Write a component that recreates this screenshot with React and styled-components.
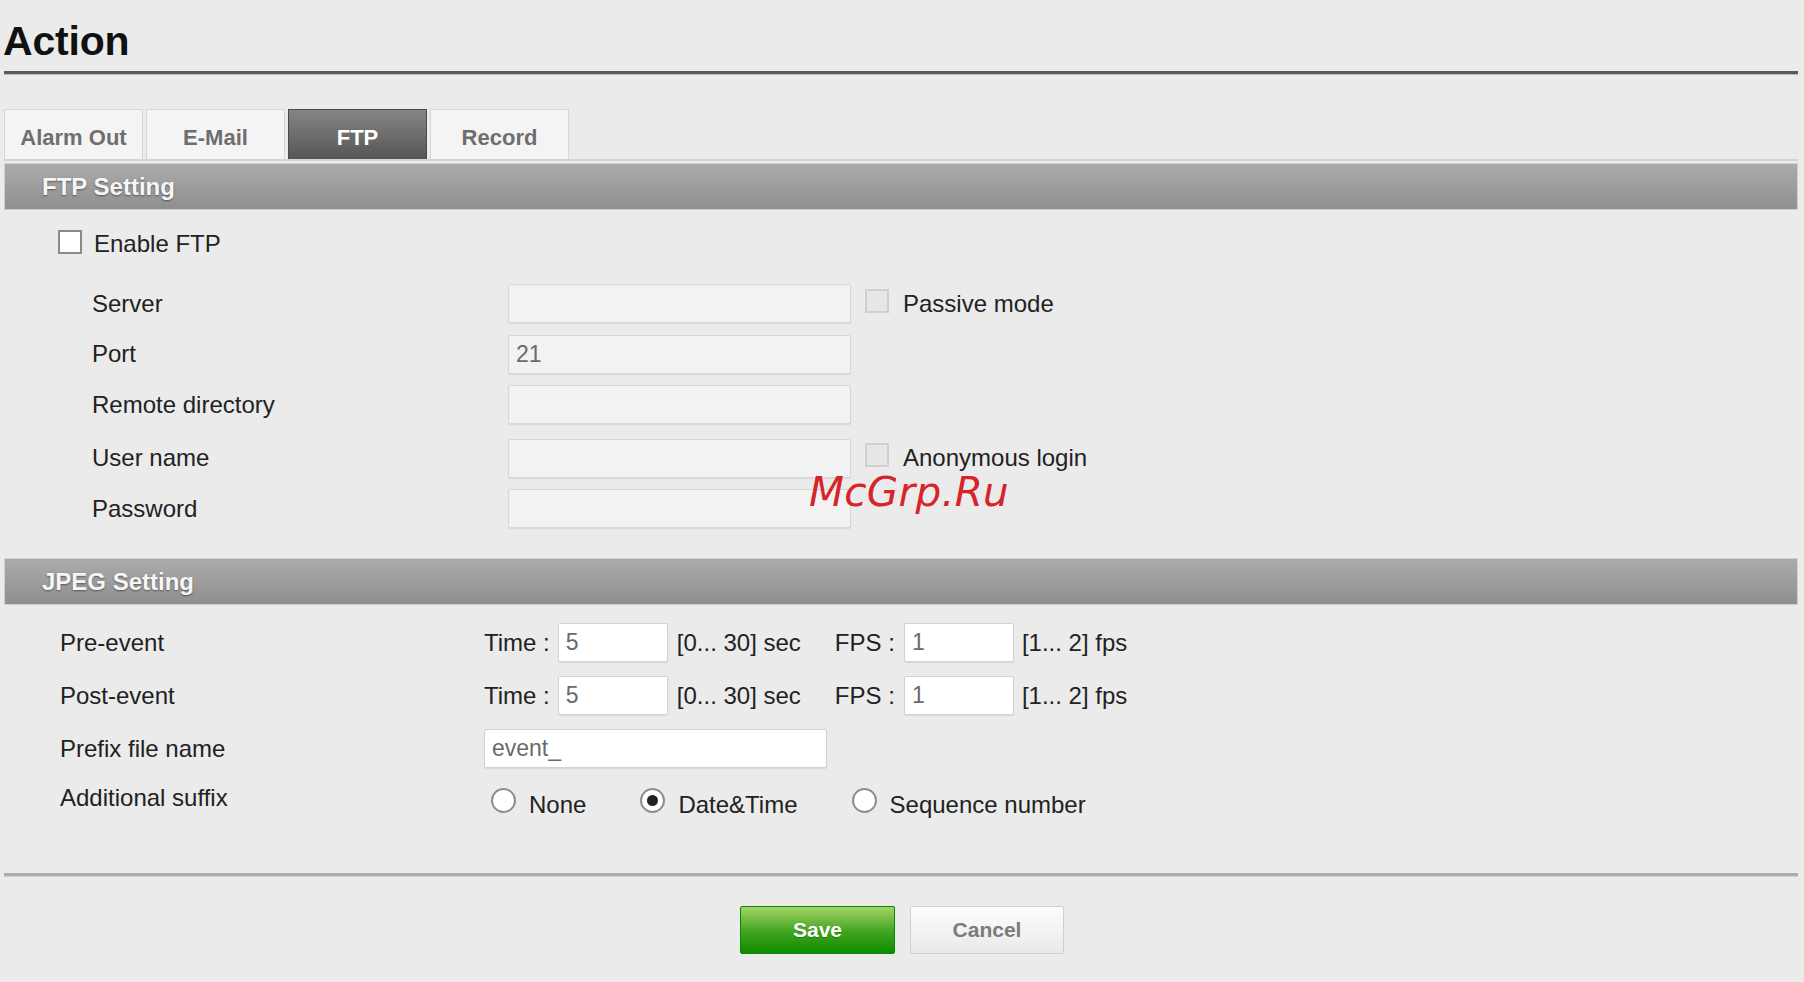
import React from "react";
import styled, { createGlobalStyle } from "styled-components";

const GlobalStyle = createGlobalStyle`
  html, body {
    margin: 0;
    padding: 0;
    background: #ebebeb;
  }
  body {
    font-family: "Liberation Sans", Arial, sans-serif;
    color: #222;
  }
`;

const Page = styled.div`
  position: relative;
  width: 1804px;
  height: 982px;
  box-sizing: border-box;
  padding: 0 6px 0 4px;
  overflow: hidden;
`;

const Title = styled.h1`
  margin: 0 0 0 -1px;
  padding-top: 19px;
  height: 50px;
  font-size: 41px;
  font-weight: bold;
  color: #111;
  line-height: 44px;
  letter-spacing: -0.2px;
`;

const HeadRule = styled.div`
  height: 3px;
  background: #5a5a5a;
  border-bottom: 1px solid #bcbcbc;
  margin-top: 2px;
`;

const TabBar = styled.div`
  display: flex;
  gap: 3px;
  margin-top: 34px;
  border-bottom: 2px solid #d4d4d4;
`;

const Tab = styled.div`
  width: 139px;
  height: 50px;
  box-sizing: border-box;
  display: flex;
  align-items: center;
  justify-content: center;
  padding-top: 7px;
  font-size: 22px;
  font-weight: bold;
  border: 1px solid ${(p) => (p.$active ? "#4a4a4a" : "#d6d6d6")};
  border-bottom: none;
  color: ${(p) => (p.$active ? "#fff" : "#6e6e6e")};
  background: ${(p) => (p.$active ? "linear-gradient(#858585, #555)" : "#f4f4f4")};
`;

const SectionBar = styled.div`
  height: 47px;
  box-sizing: border-box;
  margin-top: 2px;
  padding-left: 37px;
  display: flex;
  align-items: center;
  background: linear-gradient(#ababab, #8f8f8f);
  border: 1px solid #d0d0d0;
  color: #f6f6f6;
  font-size: 24px;
  font-weight: bold;
  text-shadow: 0 1px 2px rgba(0, 0, 0, 0.45);
`;

const FtpBody = styled.div`
  padding: 19px 0 28px 54px;
`;

const CheckRow = styled.label`
  display: flex;
  align-items: center;
  gap: 12px;
  font-size: 24px;
  height: 30px;
`;

const Box = styled.span`
  width: 24px;
  height: 24px;
  box-sizing: border-box;
  flex: none;
  border: 2px solid ${(p) => (p.$disabled ? "#cfcfcf" : "#8a8a8a")};
  background: ${(p) => (p.$disabled ? "#e6e6e6" : "#fff")};
  margin-top: ${(p) => (p.$disabled ? "-6px" : "-5px")};
`;

const FieldGrid = styled.div`
  display: grid;
  grid-template-columns: 416px 343px auto;
  row-gap: 11.5px;
  margin-top: 25px;
  padding-left: 34px;
  align-items: center;
`;

const Label = styled.div`
  font-size: 24px;
  color: #222;
  margin-top: ${(p) => p.$mt || 0}px;
`;

const TextBox = styled.div`
  width: ${(p) => p.$w || 343}px;
  height: 39px;
  box-sizing: border-box;
  border: 1px solid ${(p) => (p.$white ? "#d2d2d2" : "#d6d6d6")};
  box-shadow: 0 1px 1px rgba(0, 0, 0, 0.08);
  background: ${(p) => (p.$white ? "#fff" : "#f2f2f2")};
  border-radius: 2px;
  padding-left: 7px;
  display: flex;
  align-items: center;
  font-size: 23px;
  color: #6a6a6a;
  margin-top: ${(p) => p.$mt || 0}px;
`;

const SideCheck = styled.div`
  display: flex;
  align-items: center;
  gap: 14px;
  padding-left: 14px;
  font-size: 24px;
  color: #222;
  margin-top: ${(p) => p.$mt || 0}px;
`;

const JpegBody = styled.div`
  display: grid;
  grid-template-columns: 424px auto;
  row-gap: 14px;
  padding: 18px 0 0 56px;
  align-items: center;
`;

const Inline = styled.div`
  display: flex;
  align-items: center;
  font-size: 24px;
  color: #222;
`;

const Unit = styled.span`
  margin: 0 ${(p) => p.$after || 0}px 0 ${(p) => p.$before || 0}px;
`;

const RadioRow = styled.div`
  display: flex;
  align-items: center;
  padding-left: 7px;
  font-size: 24px;
  height: 32px;
`;

const RadioItem = styled.label`
  display: flex;
  align-items: center;
  gap: 13px;
  margin-right: ${(p) => p.$mr}px;
  padding-top: 14px;
`;

const RadioCircle = styled.span`
  width: 25px;
  height: 25px;
  box-sizing: border-box;
  border-radius: 50%;
  border: 2px solid #8e8e8e;
  background: #fff;
  display: flex;
  align-items: center;
  justify-content: center;
  margin-top: -10px;
  &::after {
    content: "";
    width: 11px;
    height: 11px;
    border-radius: 50%;
    background: ${(p) => (p.$on ? "#222" : "transparent")};
  }
`;

const FootRule = styled.div`
  margin-top: 59px;
  height: 3px;
  background: #acacac;
  border-bottom: 1px solid #d2d2d2;
`;

const Buttons = styled.div`
  display: flex;
  justify-content: center;
  gap: 15px;
  margin-top: 29px;
  padding-left: 2px;
`;

const Button = styled.button`
  width: ${(p) => p.$w}px;
  height: 48px;
  font-family: "Liberation Sans", Arial, sans-serif;
  font-size: 21px;
  font-weight: bold;
  border-radius: 2px;
  cursor: pointer;
  ${(p) =>
    p.$primary
      ? `
    color: #fff;
    background: linear-gradient(#a5d366, #3fa41f 55%, #0f8b00);
    border: 1px solid #0b8600;
    text-shadow: 0 1px 1px rgba(0,0,0,0.25);
  `
      : `
    color: #7b7b7b;
    background: linear-gradient(#fdfdfd, #e9e9e9);
    border: 1px solid #cfcfcf;
  `}
`;

const Watermark = styled.div`
  position: absolute;
  left: 809px;
  top: 468px;
  font-family: "DejaVu Sans", sans-serif;
  font-style: italic;
  font-size: 40.5px;
  color: #d7242a;
  letter-spacing: 0.3px;
  pointer-events: none;
`;

const ftpFields = [
  { label: "Server", value: "", side: "Passive mode" },
  { label: "Port", value: "21" },
  { label: "Remote directory", value: "" },
  { label: "User name", value: "", side: "Anonymous login", mt: 3 },
  { label: "Password", value: "" },
];

const events = ["Pre-event", "Post-event"];

export default function App() {
  return (
    <>
      <GlobalStyle />
      <Page>
        <Title>Action</Title>
        <HeadRule />
        <TabBar>
          <Tab>Alarm Out</Tab>
          <Tab>E-Mail</Tab>
          <Tab $active>FTP</Tab>
          <Tab>Record</Tab>
        </TabBar>

        <SectionBar>FTP Setting</SectionBar>
        <FtpBody>
          <CheckRow>
            <Box />
            Enable FTP
          </CheckRow>
          <FieldGrid>
            {ftpFields.map((f) => (
              <React.Fragment key={f.label}>
                <Label $mt={f.mt}>{f.label}</Label>
                <TextBox $mt={f.mt}>{f.value}</TextBox>
                {f.side ? (
                  <SideCheck $mt={f.mt}>
                    <Box $disabled />
                    {f.side}
                  </SideCheck>
                ) : (
                  <div />
                )}
              </React.Fragment>
            ))}
          </FieldGrid>
        </FtpBody>

        <SectionBar>JPEG Setting</SectionBar>
        <JpegBody>
          {events.map((e) => (
            <React.Fragment key={e}>
              <Label>{e}</Label>
              <Inline>
                <Unit $after={8}>Time :</Unit>
                <TextBox $white $w={110}>5</TextBox>
                <Unit $before={9} $after={34}>[0... 30] sec</Unit>
                <Unit $after={9}>FPS :</Unit>
                <TextBox $white $w={110}>1</TextBox>
                <Unit $before={8}>[1... 2] fps</Unit>
              </Inline>
            </React.Fragment>
          ))}
          <Label>Prefix file name</Label>
          <TextBox $white $w={343}>event_</TextBox>
          <Label>Additional suffix</Label>
          <RadioRow>
            <RadioItem $mr={54}>
              <RadioCircle />
              None
            </RadioItem>
            <RadioItem $mr={54}>
              <RadioCircle $on />
              Date&amp;Time
            </RadioItem>
            <RadioItem $mr={0}>
              <RadioCircle />
              Sequence number
            </RadioItem>
          </RadioRow>
        </JpegBody>

        <FootRule />
        <Buttons>
          <Button $primary $w={155}>Save</Button>
          <Button $w={154}>Cancel</Button>
        </Buttons>

        <Watermark>McGrp.Ru</Watermark>
      </Page>
    </>
  );
}
